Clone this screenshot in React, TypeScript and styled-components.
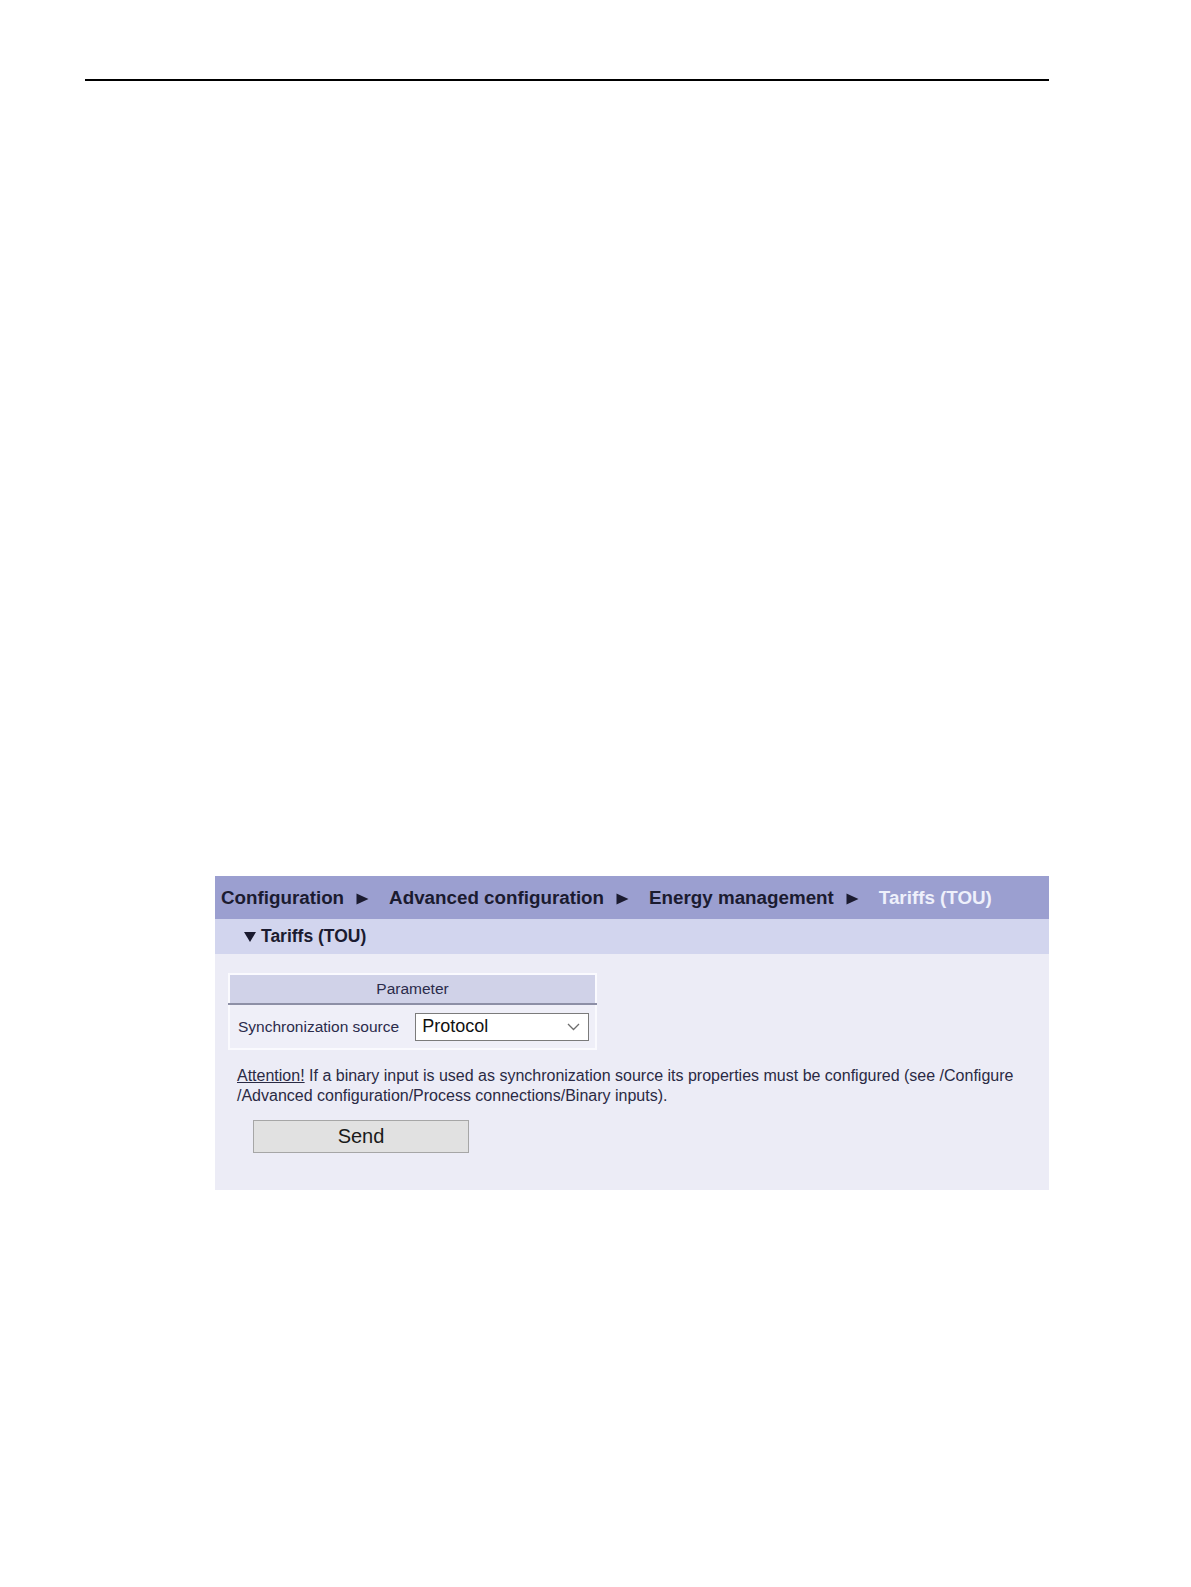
import { Fragment } from "react";
import styled, { createGlobalStyle } from "styled-components";

const GlobalStyle = createGlobalStyle`
  body {
    margin: 0;
    background: #ffffff;
    font-family: "Liberation Sans", Arial, sans-serif;
  }
`;

const Page = styled.div`
  padding-top: 79px;
  min-height: 1587px;
  box-sizing: border-box;
`;

const Rule = styled.div`
  margin-left: 85px;
  width: 964px;
  height: 2px;
  background: #000;
`;

const Panel = styled.section`
  margin: 795px 0 0 215px;
  width: 834px;
  background: #ececf6;
`;

const Breadcrumb = styled.nav`
  height: 43px;
  display: flex;
  align-items: center;
  padding-left: 6px;
  background: #9b9fd0;
  font-size: 18.8px;
  font-weight: 700;
  color: #1b1b30;
`;

const Crumb = styled.span<{ $current?: boolean }>`
  color: ${(p) => (p.$current ? "#eef0fb" : "#1b1b30")};
  white-space: nowrap;
`;

const CrumbArrow = styled.svg`
  width: 13px;
  height: 12px;
  margin: 2px 20px 0 12px;
  flex-shrink: 0;
`;

const SectionTitle = styled.div`
  height: 35px;
  display: flex;
  align-items: center;
  gap: 5px;
  padding-left: 29px;
  background: #d2d5ee;
  font-size: 17.5px;
  font-weight: 700;
  color: #1b1b30;
`;

const Caret = styled.svg`
  width: 12px;
  height: 11px;
`;

const Body = styled.div`
  padding: 19px 0 37px 13px;
`;

const ParamTable = styled.table`
  width: 369px;
  border-collapse: collapse;
  border: 2px solid #fafafe;
  font-size: 15.5px;
  color: #2b2b4b;
`;

const HeadCell = styled.th`
  height: 28px;
  padding: 0;
  background: #d0d2e8;
  border-bottom: 2px solid #8d8fa6;
  font-weight: 400;
  text-align: center;
`;

const Cell = styled.td`
  height: 43px;
  padding: 0 0 0 8px;
  background: #efeff8;
  white-space: nowrap;
`;

const SelectBox = styled.div`
  width: 174px;
  height: 28px;
  box-sizing: border-box;
  display: flex;
  align-items: center;
  justify-content: space-between;
  padding: 0 8px 0 6px;
  background: #fff;
  border: 1px solid #7b7b7b;
  font-size: 18px;
  color: #111;
  margin-left: 3px;
`;

const Chevron = styled.svg`
  width: 13px;
  height: 8px;
`;

const Note = styled.p`
  margin: 16px 0 0 9px;
  font-size: 16px;
  line-height: 19.5px;
  color: #2a2a44;
`;

const Underlined = styled.span`
  text-decoration: underline;
`;

const SendButton = styled.button`
  display: block;
  margin: 15px 0 0 25px;
  width: 216px;
  height: 33px;
  background: #e1e1e1;
  border: 1px solid #a6a6a6;
  font-family: "Liberation Sans", Arial, sans-serif;
  font-size: 20px;
  color: #1a1a1a;
  padding: 0;
`;

const Arrow = () => (
  <CrumbArrow viewBox="0 0 13 12">
    <polygon points="0.5,0.5 12.5,6 0.5,11.5" fill="#1b1b30" />
  </CrumbArrow>
);

const crumbs = ["Configuration", "Advanced configuration", "Energy management"];

export default function App() {
  return (
    <>
      <GlobalStyle />
      <Page>
        <Rule />
        <Panel>
          <Breadcrumb>
            {crumbs.map((c) => (
              <Fragment key={c}>
                <Crumb>{c}</Crumb>
                <Arrow />
              </Fragment>
            ))}
            <Crumb $current>Tariffs (TOU)</Crumb>
          </Breadcrumb>
          <SectionTitle>
            <Caret viewBox="0 0 12 11">
              <polygon points="0,1 12,1 6,11" fill="#1b1b30" />
            </Caret>
            Tariffs (TOU)
          </SectionTitle>
          <Body>
            <ParamTable>
              <thead>
                <tr>
                  <HeadCell colSpan={2}>Parameter</HeadCell>
                </tr>
              </thead>
              <tbody>
                <tr>
                  <Cell>Synchronization source</Cell>
                  <Cell>
                    <SelectBox>
                      Protocol
                      <Chevron viewBox="0 0 13 8">
                        <polyline points="1,1 6.5,6.5 12,1" fill="none" stroke="#6d6d6d" strokeWidth="1.3" />
                      </Chevron>
                    </SelectBox>
                  </Cell>
                </tr>
              </tbody>
            </ParamTable>
            <Note>
              <Underlined>Attention!</Underlined> If a binary input is used as synchronization source its properties must be configured (see /Configure
              <br />
              /Advanced configuration/Process connections/Binary inputs).
            </Note>
            <SendButton>Send</SendButton>
          </Body>
        </Panel>
      </Page>
    </>
  );
}
